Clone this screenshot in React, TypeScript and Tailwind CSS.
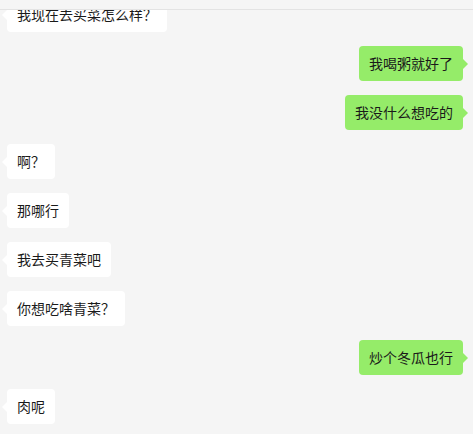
import React from "react";

type Msg = { id: number; text: string; mine: boolean };

const MESSAGES: Msg[] = [
  { id: 1, text: "我现在去买菜怎么样？", mine: false },
  { id: 2, text: "我喝粥就好了", mine: true },
  { id: 3, text: "我没什么想吃的", mine: true },
  { id: 4, text: "啊？", mine: false },
  { id: 5, text: "那哪行", mine: false },
  { id: 6, text: "我去买青菜吧", mine: false },
  { id: 7, text: "你想吃啥青菜？", mine: false },
  { id: 8, text: "炒个冬瓜也行", mine: true },
  { id: 9, text: "肉呢", mine: false },
];

function Bubble({ msg }: { msg: Msg }) {
  return (
    <div className={`flex ${msg.mine ? "justify-end pr-[10px]" : "justify-start pl-[7px]"}`}>
      <div
        className={`relative rounded-[4px] px-[10px] py-[10px] text-[14px] leading-[15px] text-[#1a1a1a] ${
          msg.mine ? "bg-[#95ec69]" : "bg-white"
        }`}
      >
        {msg.text}
        {msg.mine ? (
          <span className="absolute right-[-5px] top-[13px] h-0 w-0 border-y-[5px] border-l-[5px] border-y-transparent border-l-[#95ec69]" />
        ) : (
          <span className="absolute left-[-5px] top-[13px] h-0 w-0 border-y-[5px] border-r-[5px] border-y-transparent border-r-white" />
        )}
      </div>
    </div>
  );
}

export default function App() {
  return (
    <div
      className="flex h-[434px] w-[473px] flex-col overflow-hidden bg-[#f5f5f5]"
      style={{ fontFamily: '"Noto Sans CJK SC", "Noto Sans", sans-serif' }}
    >
      <div className="h-[10px] shrink-0 border-b border-[#e3e3e3] bg-[#f5f5f5]" />
      <div className="relative flex-1 overflow-hidden">
        <div className="-mt-[13px] flex flex-col gap-[14px]">
          {MESSAGES.map((m) => (
            <Bubble key={m.id} msg={m} />
          ))}
        </div>
      </div>
    </div>
  );
}
